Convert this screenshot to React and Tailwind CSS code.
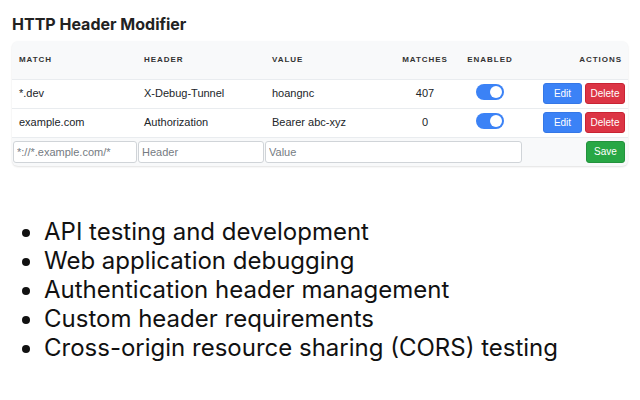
const RULES = [
  { id: 1, match: '*.dev', header: 'X-Debug-Tunnel', value: 'hoangnc', matches: 407, enabled: true },
  { id: 2, match: 'example.com', header: 'Authorization', value: 'Bearer abc-xyz', matches: 0, enabled: true },
];

const USES = [
  'API testing and development',
  'Web application debugging',
  'Authentication header management',
  'Custom header requirements',
  'Cross-origin resource sharing (CORS) testing',
];

function Toggle({ on }) {
  return (
    <span className={`inline-flex h-[16px] w-[28px] items-center rounded-full px-[2px] ${on ? 'justify-end bg-[#3b82f6]' : 'justify-start bg-gray-300'}`}>
      <span className="h-[12px] w-[12px] rounded-full bg-white" />
    </span>
  );
}

function Btn({ color, children }) {
  return (
    <button className={`h-[21px] w-[39px] rounded-[3px] border text-[10px] text-white ${color}`}>{children}</button>
  );
}

const inputCls = 'h-[22px] w-full rounded-[3px] border border-[#d0d4d8] bg-white px-[3px] text-[11px] outline-none placeholder:text-[#757b82]';

export default function App() {
  return (
    <div className="h-[400px] w-[640px] bg-white text-[#212529]" style={{ fontFamily: 'Inter, "Liberation Sans", sans-serif' }}>
      <div className="px-[12px] pt-[14px]">
        <h1 className="text-[16px] font-bold leading-[20px] text-[#222]">HTTP Header Modifier</h1>

        <div className="mt-[7px] overflow-hidden rounded-[6px] bg-[#f8f9fa] shadow-[0_1px_2px_rgba(0,0,0,0.12)]">
          <table className="w-full table-fixed border-collapse text-[11px]" style={{ fontFamily: '"Liberation Sans", Arial, sans-serif' }}>
            <colgroup>
              <col className="w-[125px]" />
              <col className="w-[128px]" />
              <col className="w-[130px]" />
              <col className="w-[60px]" />
              <col className="w-[70px]" />
              <col />
            </colgroup>
            <thead>
              <tr className="h-[38px] text-[8px] font-bold uppercase tracking-[0.12em] text-[#333]">
                <th className="px-[7px] text-left">Match</th>
                <th className="px-[7px] text-left">Header</th>
                <th className="px-[7px] text-left">Value</th>
                <th className="text-center">Matches</th>
                <th className="text-center">Enabled</th>
                <th className="px-[6px] text-right">Actions</th>
              </tr>
            </thead>
            <tbody>
              {RULES.map((r) => (
                <tr key={r.id} className="h-[29px] border-t border-[#e9ecef] bg-white">
                  <td className="px-[7px]">{r.match}</td>
                  <td className="px-[7px]">{r.header}</td>
                  <td className="px-[7px]">{r.value}</td>
                  <td className="text-center">{r.matches}</td>
                  <td className="text-center">
                    <Toggle on={r.enabled} />
                  </td>
                  <td className="px-[3px] text-right">
                    <div className="flex justify-end gap-[3px]">
                      <Btn color="border-[#3577e6] bg-[#3b82f6]">Edit</Btn>
                      <Btn color="w-[40px] border-[#c82333] bg-[#dc3545]">Delete</Btn>
                    </div>
                  </td>
                </tr>
              ))}
              <tr className="h-[29px] border-t border-[#e9ecef]">
                <td className="pl-[1px]">
                  <input className={inputCls} placeholder="*://*.example.com/*" />
                </td>
                <td className="pl-[1px] pr-[1px]">
                  <input className={inputCls} placeholder="Header" />
                </td>
                <td colSpan={3} className="pr-[3px]">
                  <input className={inputCls} placeholder="Value" />
                </td>
                <td className="px-[3px] text-right">
                  <button className="h-[22px] w-[39px] rounded-[3px] border border-[#23923d] bg-[#28a745] text-[10px] text-white">Save</button>
                </td>
              </tr>
            </tbody>
          </table>
        </div>
      </div>

      <ul className="mt-[51px] list-disc pl-[44px] text-[24px] leading-[29px] text-[#111]">
        {USES.map((u) => (
          <li key={u}>{u}</li>
        ))}
      </ul>
    </div>
  );
}
